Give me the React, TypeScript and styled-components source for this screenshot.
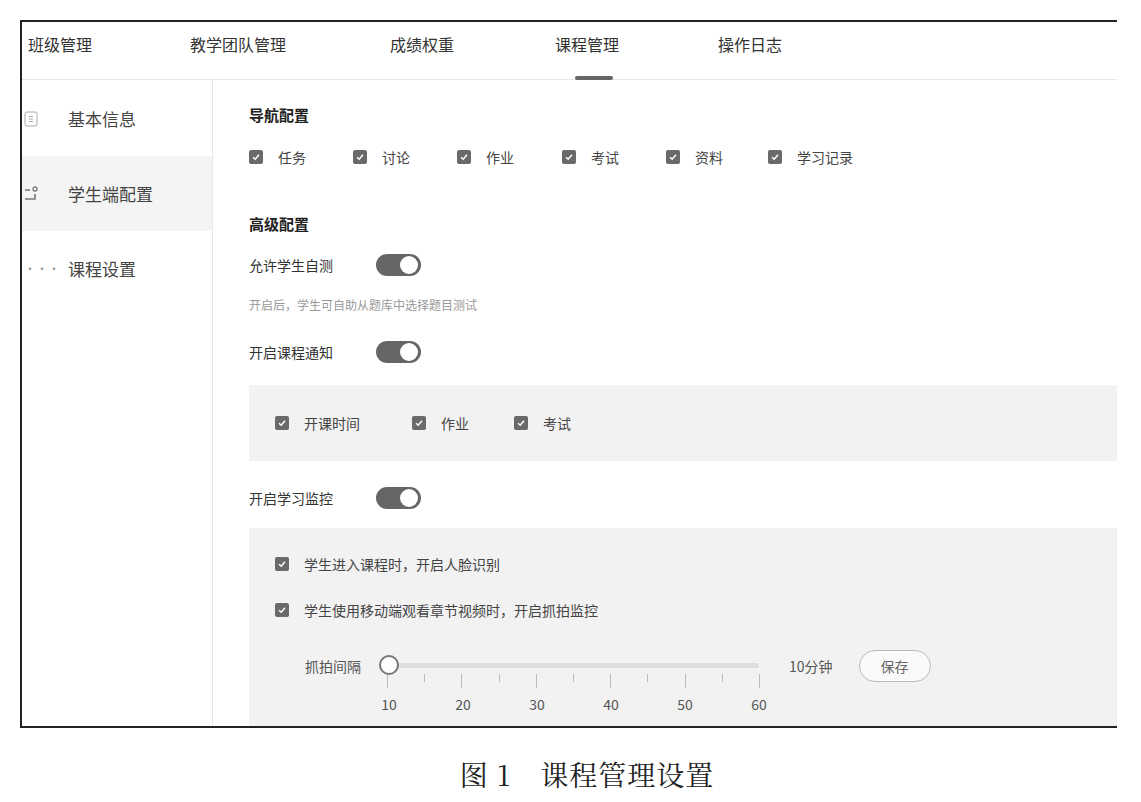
import React from "react";
import styled, { createGlobalStyle } from "styled-components";

const G = createGlobalStyle`
  body { margin: 0; background: #fff; font-family: "Noto Sans CJK SC", "Noto Sans", sans-serif; color: #333; }
`;
const Page = styled.div`padding: 20px 0 0 20px; width: 1141px; box-sizing: border-box;`;
const Frame = styled.div`
  width: 1097px; height: 708px; box-sizing: border-box; border: 2px solid #222; border-right: none;
  overflow: hidden; display: flex; flex-direction: column;
`;
const Tabs = styled.div`height: 57px; border-bottom: 1px solid #e6e6e6; display: flex; flex-shrink: 0;`;
const Tab = styled.div<{ $w: number; $active?: boolean }>`
  width: ${p => p.$w}px; font-size: 16px; color: #333; padding-top: 10px; position: relative; box-sizing: border-box;
  padding-left: 6px;
  ${p => p.$active ? `&:after{content:"";position:absolute;left:26px;bottom:-1px;width:38px;height:4px;background:#666;border-radius:2px;}` : ""}
`;
const Body = styled.div`flex: 1; display: flex; min-height: 0;`;
const Side = styled.div`width: 190px; border-right: 1px solid #e6e6e6; padding-top: 1px; flex-shrink: 0;`;
const SideItem = styled.div<{ $active?: boolean }>`
  height: 75px; display: flex; align-items: center; font-size: 17px; color: #444;
  background: ${p => p.$active ? "#f4f4f4" : "transparent"}; padding-left: 2px;
`;
const SideIcon = styled.span`width: 44px; display: flex; align-items: center; color: #999; font-size: 12px;`;
const Main = styled.div`flex: 1; padding: 24px 0 0 36px;`;
const H = styled.div<{ $mt?: number }>`font-size: 15px; font-weight: 700; color: #222; margin-top: ${p => p.$mt ?? 0}px;`;
const CheckRow = styled.div<{ $mt?: number; $h?: number }>`
  display: flex; align-items: center; margin-top: ${p => p.$mt ?? 0}px; ${p => p.$h ? `height:${p.$h}px;` : ""}
`;
const Check = styled.label<{ $w?: number }>`
  display: flex; align-items: center; gap: 15px; font-size: 14px; color: #444; ${p => p.$w ? `width:${p.$w}px;` : ""}
`;
const Item = styled.div<{ $pt: number }>`padding-top: ${p => p.$pt}px;`;
const Box = styled.span`
  width: 14px; height: 14px; border-radius: 2px; background: #6a6a6a; display: inline-flex; align-items: center; justify-content: center;
`;
const Line = styled.div<{ $mt: number }>`margin-top: ${p => p.$mt}px; display: flex; align-items: center; font-size: 14px; color: #333;`;
const Toggle = styled.span`
  margin-left: 43px; width: 45px; height: 22px; border-radius: 11px; background: #666; position: relative; display: inline-block;
  &:after{content:"";position:absolute;right:3px;top:2px;width:18px;height:18px;border-radius:50%;background:#fff;}
`;
const Hint = styled.div`margin-top: 20px; font-size: 12px; color: #999;`;
const Panel = styled.div<{ $mt: number; $h: number }>`
  margin-top: ${p => p.$mt}px; height: ${p => p.$h}px; background: #f2f2f2; padding: 0 0 0 26px; box-sizing: border-box;
`;
const SliderRow = styled.div`display: flex; align-items: flex-start; margin-top: 30px; padding-left: 30px;`;
const SLabel = styled.span`font-size: 14px; color: #555; margin-top: 6px; width: 74px;`;
const Slider = styled.div`width: 380px; position: relative; height: 62px;`;
const Track = styled.div`position: absolute; left: 8px; right: 0; top: 13px; height: 5px; background: #ddd; border-radius: 3px;`;
const Knob = styled.div`position: absolute; left: 0; top: 5px; width: 16px; height: 16px; border: 2px solid #777; border-radius: 50%; background: #fff;`;
const Tick = styled.div<{ $x: number; $big?: boolean }>`
  position: absolute; left: ${p => p.$x}px; top: 24px; width: 1px; height: ${p => p.$big ? 14 : 8}px; background: #bbb;
`;
const Num = styled.span<{ $x: number }>`position: absolute; left: ${p => p.$x}px; top: 44px; transform: translateX(-50%); font-size: 14px; color: #555;`;
const Value = styled.span`font-size: 14px; color: #555; margin: 6px 0 0 30px;`;
const Save = styled.button`
  margin-left: 26px; width: 72px; height: 32px; border: 1px solid #bbb; border-radius: 16px; background: #fafafa; color: #666;
  font-size: 14px; font-family: inherit;
`;
const Caption = styled.div`
  font-family: "Noto Serif CJK SC", "Liberation Serif", "Noto Sans CJK SC", serif; font-size: 28px; color: #222;
  text-align: center; margin-top: 26px; width: 1134px; letter-spacing: 1px;
`;

const Tk = () => (
  <svg width="10" height="10" viewBox="0 0 10 10"><path d="M2 5.2 L4.2 7.2 L8 2.8" stroke="#fff" strokeWidth="1.5" fill="none" /></svg>
);
const C = ({ t, w }: { t: string; w?: number }) => <Check $w={w}><Box><Tk /></Box>{t}</Check>;

export default function App() {
  const vals = [10, 20, 30, 40, 50, 60];
  return (
    <Page>
      <G />
      <Frame>
        <Tabs>
          <Tab $w={162}>班级管理</Tab>
          <Tab $w={200}>教学团队管理</Tab>
          <Tab $w={165}>成绩权重</Tab>
          <Tab $w={163} $active>课程管理</Tab>
          <Tab $w={150}>操作日志</Tab>
        </Tabs>
        <Body>
          <Side>
            <SideItem><SideIcon><svg width="14" height="16" viewBox="0 0 14 16"><rect x="1" y="1" width="12" height="14" rx="2" fill="none" stroke="#aaa" /><path d="M5 5.5h4M5 8h4M5 10.5h4" stroke="#aaa" /></svg></SideIcon>基本信息</SideItem>
            <SideItem $active><SideIcon><svg width="16" height="16" viewBox="0 0 16 16"><path d="M1 4h5M1 13h10v-5" fill="none" stroke="#777" strokeWidth="1.6" /><circle cx="11" cy="3" r="2" fill="none" stroke="#777" strokeWidth="1.3" /></svg></SideIcon>学生端配置</SideItem>
            <SideItem><SideIcon>•••</SideIcon>课程设置</SideItem>
          </Side>
          <Main>
            <H>导航配置</H>
            <CheckRow $mt={22}>
              <C t="任务" w={104} /><C t="讨论" w={104} /><C t="作业" w={105} /><C t="考试" w={104} /><C t="资料" w={102} /><C t="学习记录" />
            </CheckRow>
            <H $mt={46}>高级配置</H>
            <Line $mt={20}>允许学生自测<Toggle /></Line>
            <Hint>开启后，学生可自助从题库中选择题目测试</Hint>
            <Line $mt={28}>开启课程通知<Toggle /></Line>
            <Panel $mt={22} $h={76}>
              <CheckRow $h={76}><C t="开课时间" w={137} /><C t="作业" w={102} /><C t="考试" /></CheckRow>
            </Panel>
            <Line $mt={26}>开启学习监控<Toggle /></Line>
            <Panel $mt={19} $h={220}>
              <Item $pt={26}><C t="学生进入课程时，开启人脸识别" /></Item>
              <Item $pt={26}><C t="学生使用移动端观看章节视频时，开启抓拍监控" /></Item>
              <SliderRow>
                <SLabel>抓拍间隔</SLabel>
                <Slider>
                  <Track />
                  {Array.from({ length: 11 }).map((_, i) => <Tick key={i} $x={8 + i * 37.2} $big={i % 2 === 0} />)}
                  {vals.map((v, i) => <Num key={v} $x={10 + i * 74}>{v}</Num>)}
                  <Knob />
                </Slider>
                <Value>10分钟</Value>
                <Save>保存</Save>
              </SliderRow>
            </Panel>
          </Main>
        </Body>
      </Frame>
      <Caption>图 1　课程管理设置</Caption>
    </Page>
  );
}
